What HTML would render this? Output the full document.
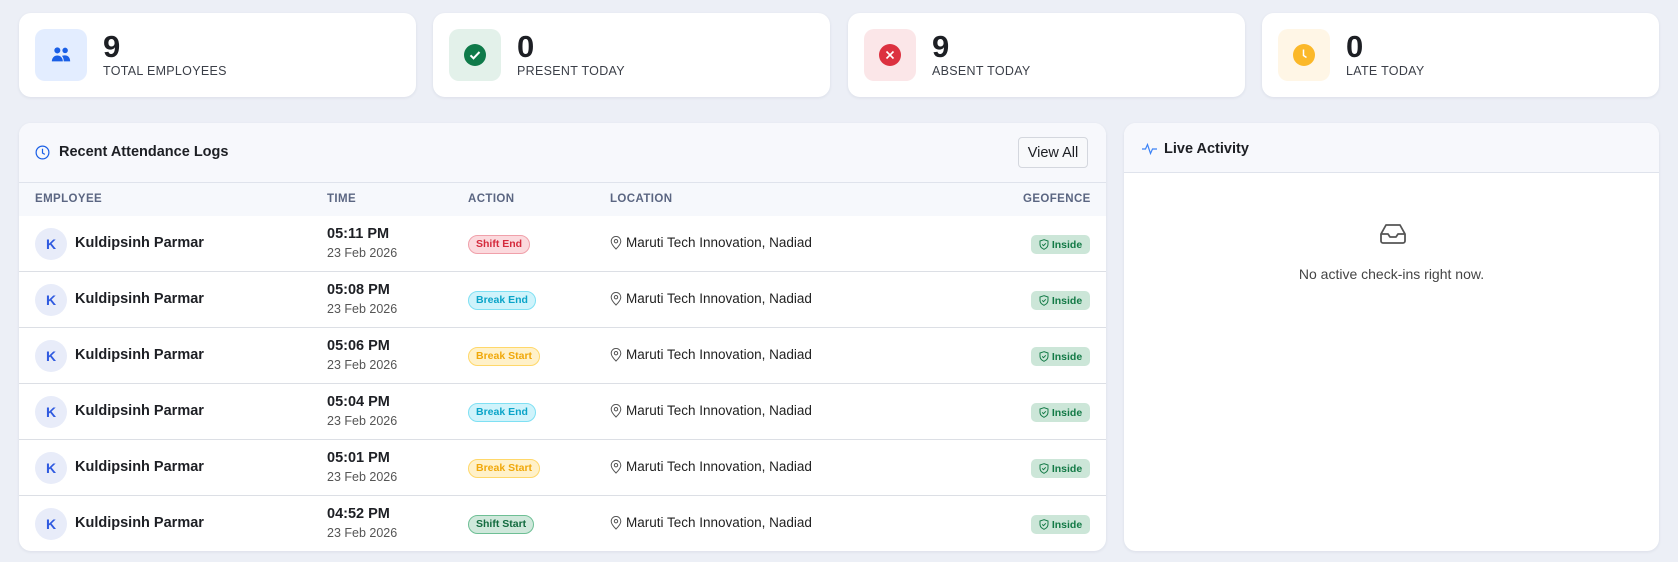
<!DOCTYPE html>
<html><head><style>
*{box-sizing:border-box;margin:0;padding:0}
body{width:1678px;height:562px;background:#eceff6;font-family:"Liberation Sans",sans-serif;color:#1d1f24;position:relative;overflow:hidden}
.card{position:absolute;top:13px;height:84px;background:#fff;border-radius:12px;box-shadow:0 1px 3px rgba(30,40,80,.08)}
.ib{position:absolute;left:16px;top:16px;width:52px;height:52px;border-radius:10px;display:flex;align-items:center;justify-content:center}
.num{position:absolute;left:84px;top:18px;font-size:31px;font-weight:700;line-height:32px}
.lbl{position:absolute;left:84px;top:51px;font-size:12.5px;color:#3b3f48;letter-spacing:.3px}
.panel{position:absolute;top:123px;background:#fff;border-radius:12px;overflow:hidden;box-shadow:0 1px 3px rgba(30,40,80,.08)}
.ph{background:#f7f8fc;border-bottom:1px solid #dfe3ec;position:relative}
.th{position:absolute;top:193px;font-size:11.5px;font-weight:700;color:#5b6682;letter-spacing:.4px}
.row{position:absolute;left:0;width:1087px;height:56px;border-bottom:1px solid #dcdfe5}
.av{position:absolute;left:16px;top:12px;width:32px;height:32px;border-radius:50%;background:#e8ecf9;color:#2f5ae0;font-weight:700;font-size:14px;display:flex;align-items:center;justify-content:center}
.nm{position:absolute;left:56px;top:19px;font-size:14.5px;font-weight:700}
.tm{position:absolute;left:308px;top:10px;font-size:14.5px;font-weight:700}
.dt{position:absolute;left:308px;top:30px;font-size:12.5px;color:#555}
.bd{position:absolute;left:449px;top:19px;height:19px;padding:0 7px;border-radius:10px;font-size:10.5px;font-weight:700;line-height:17px;border:1px solid}
.loc{position:absolute;left:591px;top:19px;font-size:13.5px;color:#222;display:flex;align-items:center;gap:4px}
.ins{position:absolute;right:16px;top:19px;height:19px;width:59px;border-radius:5px;background:#cce6d8;color:#137a46;font-size:10.5px;font-weight:700;display:flex;align-items:center;justify-content:center;gap:3px}
.se{background:#fbd9dd;border-color:#f0a0aa;color:#d42a3c}
.be{background:#cff3fb;border-color:#7fe0f3;color:#0aa4c8}
.bs{background:#fff1c9;border-color:#ffd86a;color:#f0a80a}
.ss{background:#cfe8db;border-color:#6ebf95;color:#136b3f}
</style></head><body>

<div class="card" style="left:19px;width:397px">
 <div class="ib" style="background:#e3edff"><svg width="22" height="22" viewBox="0 0 24 24" fill="#1a5fe6"><circle cx="8" cy="7" r="3.3"/><circle cx="16.5" cy="7" r="3"/><path d="M2 19c0-4 2.7-6.5 6-6.5s6 2.5 6 6.5z"/><path d="M15 19c0-2.6-.8-4.7-2-6 1.2-.5 2.2-.6 3.5-.6 3 0 5.5 2.2 5.5 6.6z"/></svg></div>
 <div class="num">9</div><div class="lbl">TOTAL EMPLOYEES</div></div>
<div class="card" style="left:433px;width:397px">
 <div class="ib" style="background:#e3f1ea"><svg width="24" height="24" viewBox="0 0 24 24"><circle cx="12" cy="12" r="11" fill="#0f7a4a"/><path d="M7.5 12.3l3 3 6-6.3" stroke="#fff" stroke-width="2" fill="none"/></svg></div>
 <div class="num">0</div><div class="lbl">PRESENT TODAY</div></div>
<div class="card" style="left:848px;width:397px">
 <div class="ib" style="background:#fbe6e8"><svg width="24" height="24" viewBox="0 0 24 24"><circle cx="12" cy="12" r="11" fill="#dc3140"/><path d="M8.5 8.5l7 7M15.5 8.5l-7 7" stroke="#fff" stroke-width="1.6"/></svg></div>
 <div class="num">9</div><div class="lbl">ABSENT TODAY</div></div>
<div class="card" style="left:1262px;width:397px">
 <div class="ib" style="background:#fff6e6"><svg width="24" height="24" viewBox="0 0 24 24"><circle cx="12" cy="12" r="11" fill="#fbb829"/><path d="M11.5 6.5v6l3 2" stroke="#fff" stroke-width="1.5" fill="none"/></svg></div>
 <div class="num">0</div><div class="lbl">LATE TODAY</div></div>

<div class="panel" style="left:19px;width:1087px;height:428px">
 <div class="ph" style="height:60px">
  <svg style="position:absolute;left:16px;top:22px" width="15" height="15" viewBox="0 0 16 16"><circle cx="8" cy="8" r="6.8" stroke="#1a5fe6" stroke-width="1.3" fill="none"/><path d="M8 4v4.5l2.5 1.5" stroke="#1a5fe6" stroke-width="1.3" fill="none"/></svg>
  <div style="position:absolute;left:40px;top:21px;font-size:14.5px;font-weight:700">Recent Attendance Logs</div>
  <div style="position:absolute;left:999px;top:14px;width:70px;height:31px;border:1px solid #d4d7de;border-radius:4px;background:#f8f9fb;font-size:14.5px;display:flex;align-items:center;justify-content:center">View All</div>
 </div>
 <div style="position:absolute;top:60px;left:0;width:100%;height:33px;background:#f6f8fc"></div>
</div>
<div class="th" style="left:35px">EMPLOYEE</div>
<div class="th" style="left:327px">TIME</div>
<div class="th" style="left:468px">ACTION</div>
<div class="th" style="left:610px">LOCATION</div>
<div class="th" style="left:1023px">GEOFENCE</div>

<div style="position:absolute;left:19px;top:216px;width:1087px;height:336px;overflow:hidden">
 <div class="row" style="top:0"><div class="av">K</div><div class="nm">Kuldipsinh Parmar</div><div class="tm">05:11 PM</div><div class="dt">23 Feb 2026</div><div class="bd se">Shift End</div><div class="loc"><svg width="12" height="14" viewBox="0 0 12 14"><path d="M6 13S1.2 8.2 1.2 5.2a4.8 4.8 0 019.6 0C10.8 8.2 6 13 6 13z" stroke="#555" fill="none"/><circle cx="6" cy="5.2" r="1.7" stroke="#555" fill="none"/></svg>Maruti Tech Innovation, Nadiad</div><div class="ins"><svg width="10" height="11" viewBox="0 0 10 11"><path d="M5 .7L1 2v3.3c0 2.5 2 4.2 4 5 2-.8 4-2.5 4-5V2z" stroke="#137a46" fill="none"/><path d="M3.2 5.4l1.3 1.3 2.3-2.4" stroke="#137a46" fill="none"/></svg>Inside</div></div>
 <div class="row" style="top:56px"><div class="av">K</div><div class="nm">Kuldipsinh Parmar</div><div class="tm">05:08 PM</div><div class="dt">23 Feb 2026</div><div class="bd be">Break End</div><div class="loc"><svg width="12" height="14" viewBox="0 0 12 14"><path d="M6 13S1.2 8.2 1.2 5.2a4.8 4.8 0 019.6 0C10.8 8.2 6 13 6 13z" stroke="#555" fill="none"/><circle cx="6" cy="5.2" r="1.7" stroke="#555" fill="none"/></svg>Maruti Tech Innovation, Nadiad</div><div class="ins"><svg width="10" height="11" viewBox="0 0 10 11"><path d="M5 .7L1 2v3.3c0 2.5 2 4.2 4 5 2-.8 4-2.5 4-5V2z" stroke="#137a46" fill="none"/><path d="M3.2 5.4l1.3 1.3 2.3-2.4" stroke="#137a46" fill="none"/></svg>Inside</div></div>
 <div class="row" style="top:112px"><div class="av">K</div><div class="nm">Kuldipsinh Parmar</div><div class="tm">05:06 PM</div><div class="dt">23 Feb 2026</div><div class="bd bs">Break Start</div><div class="loc"><svg width="12" height="14" viewBox="0 0 12 14"><path d="M6 13S1.2 8.2 1.2 5.2a4.8 4.8 0 019.6 0C10.8 8.2 6 13 6 13z" stroke="#555" fill="none"/><circle cx="6" cy="5.2" r="1.7" stroke="#555" fill="none"/></svg>Maruti Tech Innovation, Nadiad</div><div class="ins"><svg width="10" height="11" viewBox="0 0 10 11"><path d="M5 .7L1 2v3.3c0 2.5 2 4.2 4 5 2-.8 4-2.5 4-5V2z" stroke="#137a46" fill="none"/><path d="M3.2 5.4l1.3 1.3 2.3-2.4" stroke="#137a46" fill="none"/></svg>Inside</div></div>
 <div class="row" style="top:168px"><div class="av">K</div><div class="nm">Kuldipsinh Parmar</div><div class="tm">05:04 PM</div><div class="dt">23 Feb 2026</div><div class="bd be">Break End</div><div class="loc"><svg width="12" height="14" viewBox="0 0 12 14"><path d="M6 13S1.2 8.2 1.2 5.2a4.8 4.8 0 019.6 0C10.8 8.2 6 13 6 13z" stroke="#555" fill="none"/><circle cx="6" cy="5.2" r="1.7" stroke="#555" fill="none"/></svg>Maruti Tech Innovation, Nadiad</div><div class="ins"><svg width="10" height="11" viewBox="0 0 10 11"><path d="M5 .7L1 2v3.3c0 2.5 2 4.2 4 5 2-.8 4-2.5 4-5V2z" stroke="#137a46" fill="none"/><path d="M3.2 5.4l1.3 1.3 2.3-2.4" stroke="#137a46" fill="none"/></svg>Inside</div></div>
 <div class="row" style="top:224px"><div class="av">K</div><div class="nm">Kuldipsinh Parmar</div><div class="tm">05:01 PM</div><div class="dt">23 Feb 2026</div><div class="bd bs">Break Start</div><div class="loc"><svg width="12" height="14" viewBox="0 0 12 14"><path d="M6 13S1.2 8.2 1.2 5.2a4.8 4.8 0 019.6 0C10.8 8.2 6 13 6 13z" stroke="#555" fill="none"/><circle cx="6" cy="5.2" r="1.7" stroke="#555" fill="none"/></svg>Maruti Tech Innovation, Nadiad</div><div class="ins"><svg width="10" height="11" viewBox="0 0 10 11"><path d="M5 .7L1 2v3.3c0 2.5 2 4.2 4 5 2-.8 4-2.5 4-5V2z" stroke="#137a46" fill="none"/><path d="M3.2 5.4l1.3 1.3 2.3-2.4" stroke="#137a46" fill="none"/></svg>Inside</div></div>
 <div class="row" style="top:280px;border-bottom:none"><div class="av">K</div><div class="nm">Kuldipsinh Parmar</div><div class="tm">04:52 PM</div><div class="dt">23 Feb 2026</div><div class="bd ss">Shift Start</div><div class="loc"><svg width="12" height="14" viewBox="0 0 12 14"><path d="M6 13S1.2 8.2 1.2 5.2a4.8 4.8 0 019.6 0C10.8 8.2 6 13 6 13z" stroke="#555" fill="none"/><circle cx="6" cy="5.2" r="1.7" stroke="#555" fill="none"/></svg>Maruti Tech Innovation, Nadiad</div><div class="ins"><svg width="10" height="11" viewBox="0 0 10 11"><path d="M5 .7L1 2v3.3c0 2.5 2 4.2 4 5 2-.8 4-2.5 4-5V2z" stroke="#137a46" fill="none"/><path d="M3.2 5.4l1.3 1.3 2.3-2.4" stroke="#137a46" fill="none"/></svg>Inside</div></div>
</div>

<div class="panel" style="left:1124px;width:535px;height:428px">
 <div class="ph" style="height:50px">
  <svg style="position:absolute;left:18px;top:19px" width="15" height="13" viewBox="0 0 15 13"><path d="M0 7h3.5l2-4.5 3 9 2-4.5H15" stroke="#3b82f6" stroke-width="1.2" fill="none"/></svg>
  <div style="position:absolute;left:40px;top:18px;font-size:14.5px;font-weight:700">Live Activity</div>
 </div>
 <svg style="position:absolute;left:255px;top:100px" width="28" height="22" viewBox="0 0 28 22"><path d="M2 11L7 2h14l5 9v7a2 2 0 01-2 2H4a2 2 0 01-2-2z M2 11h7l2 3h6l2-3h7" stroke="#555" stroke-width="1.8" fill="none" stroke-linejoin="round"/></svg>
 <div style="position:absolute;left:0;width:100%;top:143px;text-align:center;font-size:14px;color:#444">No active check-ins right now.</div>
</div>
</body></html>
